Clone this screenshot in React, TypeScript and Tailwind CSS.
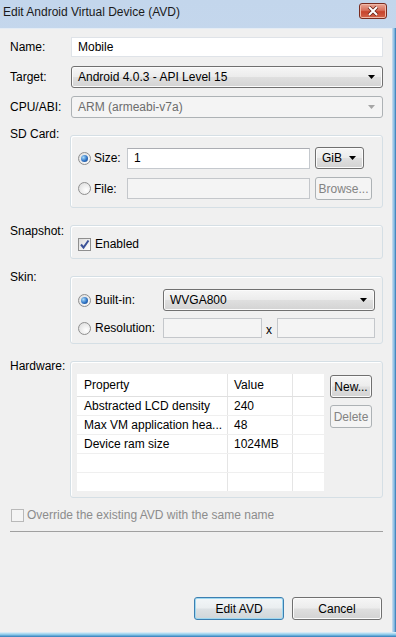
import clsx from "clsx";

const comboBg =
  "bg-[linear-gradient(#f6f6f6,#ececec_48%,#dfdfdf_52%,#d3d3d3)] shadow-[inset_0_0_0_1px_#fbfbfb]";

function Arrow({ disabled }: { disabled?: boolean }) {
  return (
    <svg width="7" height="4" viewBox="0 0 7 4">
      <polygon points="0,0 7,0 3.5,4" fill={disabled ? "#a6a6a6" : "#000"} />
    </svg>
  );
}

function Combo({
  text,
  disabled,
  className,
}: {
  text: string;
  disabled?: boolean;
  className?: string;
}) {
  return (
    <div
      className={clsx(
        "flex h-[22px] items-center justify-between rounded-[3px] border pl-[6px] pr-[7px]",
        disabled
          ? "border-[#adb2b5] bg-[#f4f4f4] text-[#6d6d6d]"
          : clsx("border-[#707070] text-black", comboBg),
        className
      )}
    >
      <span>{text}</span>
      <Arrow disabled={disabled} />
    </div>
  );
}

function Input({
  value,
  disabled,
  light,
  className,
}: {
  value?: string;
  disabled?: boolean;
  light?: boolean;
  className?: string;
}) {
  return (
    <div
      className={clsx(
        "flex h-[20px] items-center border px-[6px]",
        disabled
          ? "border-[#c4c7cb] bg-[#f4f4f4]"
          : light
          ? "border-[#dfe3e8] bg-white"
          : "border-[#c5c9ce] border-t-[#abadb3] bg-white",
        className
      )}
    >
      {value}
    </div>
  );
}

function Button({
  label,
  disabled,
  primary,
  className,
}: {
  label: string;
  disabled?: boolean;
  primary?: boolean;
  className?: string;
}) {
  return (
    <div
      className={clsx(
        "flex h-[23px] items-center justify-center rounded-[3px] border",
        disabled
          ? "border-[#adb2b5] bg-[#f4f4f4] text-[#838383]"
          : primary
          ? "border-[#3c7fb1] bg-[linear-gradient(#f2f6f8,#eaeef0_48%,#dce1e4_52%,#d0d6d9)] shadow-[inset_0_0_0_1px_#9fd8f0]"
          : clsx("border-[#707070]", comboBg),
        className
      )}
    >
      {label}
    </div>
  );
}

function Radio({ checked }: { checked?: boolean }) {
  return (
    <span className="flex h-[13px] w-[13px] shrink-0 items-center justify-center rounded-full border border-[#8f8f8f] bg-[radial-gradient(circle_at_65%_65%,#ffffff,#d9d9d9)]">
      {checked && (
        <span className="h-[7px] w-[7px] rounded-full bg-[radial-gradient(circle_at_35%_35%,#a9dcfa,#2e72c4_55%,#163d78)]" />
      )}
    </span>
  );
}

function Check({ checked, disabled }: { checked?: boolean; disabled?: boolean }) {
  return (
    <span
      className={clsx(
        "flex h-[13px] w-[13px] shrink-0 items-center justify-center border",
        disabled
          ? "border-[#b9b9b9] bg-[#f4f4f4]"
          : "border-[#8f8f8f] bg-[linear-gradient(135deg,#dcdcdc,#ffffff)]"
      )}
    >
      {checked && (
        <svg width="11" height="11" viewBox="0 0 11 11">
          <path
            d="M2 5.5 L4.5 8.5 L9.5 1.5"
            fill="none"
            stroke="#3b5298"
            strokeWidth="2"
          />
        </svg>
      )}
    </span>
  );
}

function Group({
  label,
  labelShift,
  className,
  children,
}: {
  label: string;
  labelShift: string;
  className?: string;
  children: React.ReactNode;
}) {
  return (
    <div className="mt-[17px] flex items-start">
      <div className={clsx("w-[60px] shrink-0", labelShift)}>{label}</div>
      <div
        className={clsx(
          "flex-1 rounded-[3px] border border-[#d5dfe5] shadow-[inset_1px_1px_0_#ffffff]",
          className
        )}
      >
        {children}
      </div>
    </div>
  );
}

const rows = [
  ["Abstracted LCD density", "240"],
  ["Max VM application hea...", "48"],
  ["Device ram size", "1024MB"],
  ["", ""],
  ["", ""],
];

export default function App() {
  return (
    <div className="flex h-[637px] w-[396px] flex-col bg-[linear-gradient(#c3d6ec,#d9e6f5)] font-['Liberation_Sans',Arial,sans-serif] text-[12px] leading-[16px] text-black">
      {/* title bar */}
      <div className="flex h-[28px] shrink-0 items-start justify-between pr-[9px]">
        <div className="pl-[3px] pt-[4px] text-[#1a1a1a]">
          Edit Android Virtual Device (AVD)
        </div>
        <div className="mt-[3px] flex h-[16px] w-[28px] items-center justify-center rounded-[3px] border border-[#7a2c1f] bg-[linear-gradient(#e9a897,#d8705c_45%,#c7432c_55%,#d2644a)] shadow-[inset_0_0_0_1px_#f0b8a8]">
          <svg width="12" height="10" viewBox="0 0 12 10">
            <path d="M2 1 L10 9 M10 1 L2 9" stroke="#6b2418" strokeWidth="3.6" />
            <path d="M2 1 L10 9 M10 1 L2 9" stroke="#ffffff" strokeWidth="2" />
          </svg>
        </div>
      </div>

      <div className="flex flex-1">
        {/* client area */}
        <div className="flex flex-1 flex-col border-t border-[#e4ecf5] bg-[#f0f0f0] pl-[10px] pr-[9px] pt-[8px]">
          <div className="flex items-center">
            <div className="w-[61px]">Name:</div>
            <Input value="Mobile" light className="flex-1" />
          </div>
          <div className="mt-[9px] flex items-center">
            <div className="w-[61px]">Target:</div>
            <Combo text="Android 4.0.3 - API Level 15" className="flex-1" />
          </div>
          <div className="mt-[8px] flex items-center">
            <div className="w-[61px]">CPU/ABI:</div>
            <Combo text="ARM (armeabi-v7a)" disabled className="flex-1" />
          </div>

          <Group label="SD Card:" labelShift="-mt-[9px]" className="pb-[7px] pl-[7px] pt-[11px]">
            <div className="grid grid-cols-[44px_183px_auto] items-center gap-x-[5px] gap-y-[8px]">
              <div className="flex items-center gap-[3px]">
                <Radio checked />
                <span>Size:</span>
              </div>
              <Input value="1" className="h-[21px]" />
              <Combo text="GiB" className="w-[49px] pl-[5px]" />
              <div className="flex items-center gap-[3px]">
                <Radio />
                <span>File:</span>
              </div>
              <Input disabled className="h-[21px]" />
              <Button label="Browse..." disabled className="h-[22px] w-[57px]" />
            </div>
          </Group>

          <Group label="Snapshot:" labelShift="-mt-[2px]" className="pb-[6px] pl-[7px] pt-[10px]">
            <div className="flex h-[16px] items-center gap-[4px]">
              <Check checked />
              <span>Enabled</span>
            </div>
          </Group>

          <Group label="Skin:" labelShift="-mt-[7px]" className="pb-[5px] pl-[7px] pr-[7px] pt-[12px]">
            <div className="grid grid-cols-[85px_1fr] items-center gap-y-[7px]">
              <div className="flex items-center gap-[4px]">
                <Radio checked />
                <span>Built-in:</span>
              </div>
              <Combo text="WVGA800" />
              <div className="flex items-center gap-[4px]">
                <Radio />
                <span>Resolution:</span>
              </div>
              <div className="flex items-center">
                <Input disabled className="flex-1" />
                <span className="w-[15px] pt-[3px] text-center">x</span>
                <Input disabled className="flex-1" />
              </div>
            </div>
          </Group>

          <Group label="Hardware:" labelShift="-mt-[3px]" className="flex gap-[6px] pb-[6px] pl-[6px] pt-[12px]">
            <div className="w-[247px] bg-white">
              <div className="grid h-[23px] grid-cols-[151px_65px_31px] border-b border-[#e0e0e0]">
                <div className="flex items-center border-r border-[#e5e5e5] pl-[7px]">Property</div>
                <div className="flex items-center border-r border-[#e5e5e5] pl-[6px]">Value</div>
                <div />
              </div>
              {rows.map((r, i) => (
                <div
                  key={i}
                  className={clsx(
                    "grid grid-cols-[151px_65px_31px]",
                    i < rows.length - 1 ? "h-[19px] border-b border-[#efefef]" : "h-[18px]"
                  )}
                >
                  <div className="flex items-center border-r border-[#e5e5e5] pl-[7px]">{r[0]}</div>
                  <div className="flex items-center border-r border-[#e5e5e5] pl-[6px]">{r[1]}</div>
                  <div />
                </div>
              ))}
            </div>
            <div className="flex flex-col gap-[7px] pt-[1px]">
              <Button label="New..." className="w-[42px]" />
              <Button label="Delete" disabled className="w-[42px]" />
            </div>
          </Group>

          <div className="ml-[1px] mt-[9px] flex h-[16px] items-center gap-[3px] text-[#8c8c8c]">
            <Check disabled />
            <span>Override the existing AVD with the same name</span>
          </div>
          <div className="mt-[8px] h-[1px] bg-[#a0a0a0]" />

          <div className="mt-auto flex justify-end gap-[8px] pb-[12px] pr-[1px]">
            <Button label="Edit AVD" primary className="w-[90px]" />
            <Button label="Cancel" className="w-[90px]" />
          </div>
        </div>
        {/* right frame */}
        <div className="w-[4px] bg-[linear-gradient(90deg,#cfe0f1,#7fb6df_60%,#2f73ad)]" />
      </div>
      {/* bottom frame */}
      <div className="h-[5px] shrink-0 bg-[linear-gradient(#e6f1f8,#8ecbea_50%,#2f7ab8)]" />
    </div>
  );
}
